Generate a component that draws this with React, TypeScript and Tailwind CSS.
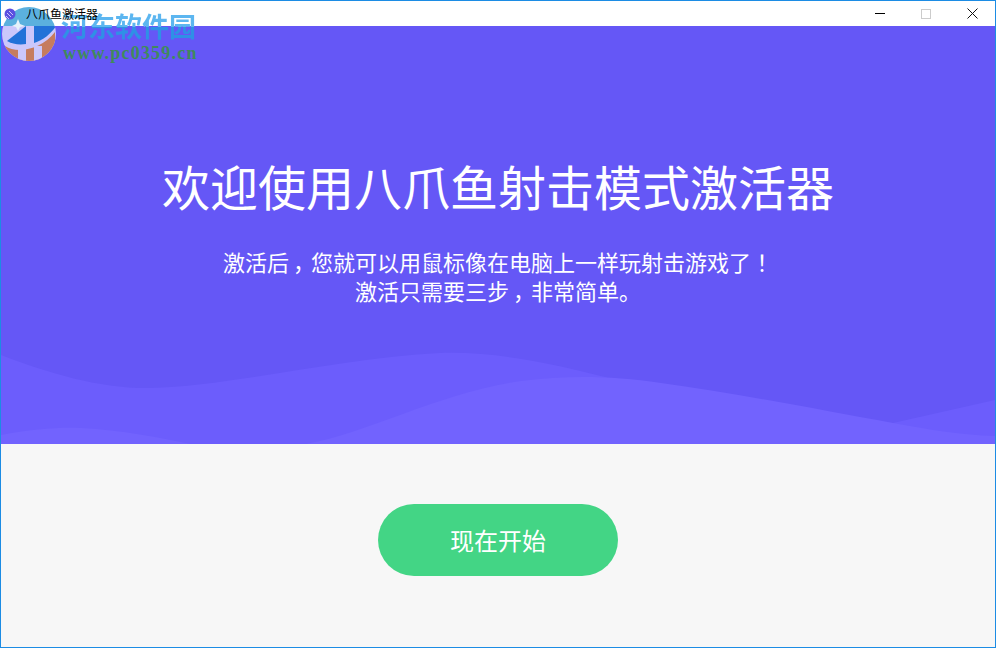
import React from 'react';

const cjk = "font-['Noto_Sans_CJK_SC','Microsoft_YaHei',sans-serif]";
const bang = "font-['Noto_Sans_CJK_TC',sans-serif]";
const comma = "inline-block w-[22px] text-center [font-feature-settings:'palt']";

const Waves = () => (
  <svg className="absolute bottom-0 left-0" width="994" height="100" viewBox="0 0 994 100">
    <path
      d="M0 11 C50 30 100 45 150 44 C230 42 340 14 439 9 C500 7 560 22 604 33 C680 52 760 86 827 85 C850 85 870 82 892 79 L994 56 V100 H0 Z"
      fill="#6C5DFC"
    />
    <path
      d="M0 91 C30 85 60 83 80 84 C120 86 160 94 190 100 H305 C370 88 440 48 520 37 C570 31 610 32 660 39 C740 50 820 66 892 79 C930 86 960 91 994 92 V100 H0 Z"
      fill="#7263FE"
    />
  </svg>
);

const Watermark = () => (
  <div className="pointer-events-none absolute left-0 top-0 h-[66px] w-[200px]">
    <svg className="absolute left-0 top-[5px]" width="56" height="58" viewBox="0 0 56 58">
      <clipPath id="disc">
        <circle cx="28" cy="28" r="27" />
      </clipPath>
      <g clipPath="url(#disc)">
        <rect width="56" height="20" fill="#5BB0DE" />
        <rect y="20" width="56" height="38" fill="#CBC7FB" />
        <path d="M4 40 C16 48 40 44 54 26 V58 H4 Z" fill="#C67C5E" />
        <path d="M17 43 H25 V58 H17 Z M33 40 H41 V58 H33 Z" fill="#CBC7FB" />
        <path d="M6 35 L25 20 V38 C18 39 11 38 6 35 Z" fill="#2272D8" />
        <path d="M33 20 H55 C50 28 42 34 33 37 Z" fill="#2272D8" />
        <path d="M17 13 L19 18 L24 20 L19 21 L17 25 L15 21 L11 20 L15 18 Z" fill="#E6F2FA" />
      </g>
    </svg>
    <div
      className={`absolute left-[60px] top-[8px] whitespace-nowrap bg-[linear-gradient(#5CB6F0_18px,#2F90E6_18px)] bg-clip-text text-[27px] font-bold leading-[34px] text-transparent ${cjk}`}
    >
      河东软件园
    </div>
    <div className="absolute left-[62px] top-[43px] whitespace-nowrap font-['Liberation_Serif',serif] text-[18px] font-bold leading-[18px] tracking-[1.2px] text-[#3F8A5C]">
      www.pc0359.cn
    </div>
  </div>
);

export default function App() {
  return (
    <div className={`relative flex h-[648px] w-[996px] flex-col border border-[#1C8CE4] bg-[#F7F7F7] ${cjk}`}>
      <div className="flex h-[25px] shrink-0 items-center bg-white pl-[3px]">
        <svg width="12" height="12" viewBox="0 0 12 12" className="relative z-10 mr-[10px]">
          <circle cx="6" cy="6" r="5.5" fill="#5B4FE0" />
          <path d="M3 5 L7 9 M5 3 L9 7 M2 8 L5 11" stroke="#C9C5FB" strokeWidth="1" />
        </svg>
        <span className="relative z-10 text-xs leading-none text-black">八爪鱼激活器</span>
        <div className="ml-auto flex items-center">
          <div className="flex h-[25px] w-[46px] items-center justify-center">
            <div className="h-px w-[10px] bg-black" />
          </div>
          <div className="flex h-[25px] w-[46px] items-center justify-center">
            <div className="h-[10px] w-[10px] border border-[#CCCCCC]" />
          </div>
          <div className="flex h-[25px] w-[46px] items-center justify-center">
            <svg width="11" height="11" viewBox="0 0 11 11">
              <path d="M0.5 0.5 L10.5 10.5 M10.5 0.5 L0.5 10.5" stroke="#111" strokeWidth="1" />
            </svg>
          </div>
        </div>
      </div>

      <div className="relative flex h-[418px] shrink-0 flex-col items-center overflow-hidden bg-[#6557F6] pt-[124px] text-white">
        <Waves />
        <h1 className="relative text-[48px] font-normal leading-[70px]">欢迎使用八爪鱼射击模式激活器</h1>
        <p className="relative mt-[27px] text-center text-[22px] leading-[29px]">
          激活后<span className={comma}>，</span>您就可以用鼠标像在电脑上一样玩射击游戏了<span className={bang}>！</span>
          <br />
          激活只需要三步<span className={comma}>，</span>非常简单。
        </p>
      </div>

      <div className="flex flex-1 justify-center pt-[60px]">
        <button className="h-[72px] w-[240px] rounded-full bg-[#43D585] text-2xl text-white">现在开始</button>
      </div>

      <Watermark />
    </div>
  );
}
